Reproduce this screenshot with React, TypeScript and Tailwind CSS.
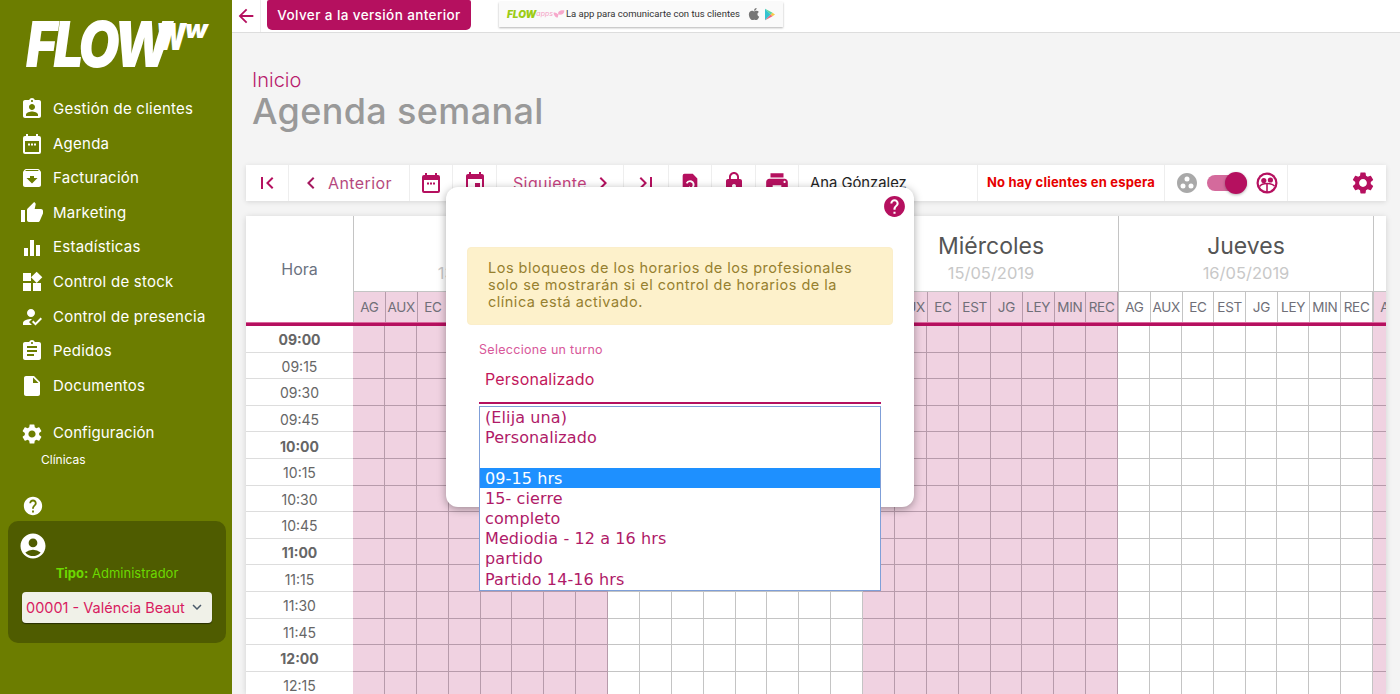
import {
  MdAssignmentInd,
  MdThumbUp,
  MdEqualizer,
  MdWidgets,
  MdHowToReg,
  MdAssignment,
  MdInsertDriveFile,
  MdSettings,
  MdHelp,
  MdAccountCircle,
  MdFirstPage,
  MdLastPage,
  MdChevronLeft,
  MdChevronRight,
  MdEvent,
  MdLock,
  MdPrint,
  MdGroupWork,
  MdArrowBack,
  MdExpandMore,
  MdArchive,
} from "react-icons/md";
import { FaApple } from "react-icons/fa";

const sans = "font-['Inter','Noto_Sans',sans-serif]";
const magenta = "text-[#b5105f]";

function CalendarDots({ className = "" }: { className?: string }) {
  return (
    <svg viewBox="0 0 24 24" className={className} fill="currentColor">
      <path d="M19 4h-1V2h-2v2H8V2H6v2H5a2 2 0 0 0-2 2v14a2 2 0 0 0 2 2h14a2 2 0 0 0 2-2V6a2 2 0 0 0-2-2zm0 16H5V9h14v11z" />
      <path d="M8 11.5h2v2H8zM11 11.5h2v2h-2zM14 11.5h2v2h-2z" />
    </svg>
  );
}

function FileRefresh({ className = "" }: { className?: string }) {
  return (
    <svg viewBox="0 0 24 24" className={className} fill="currentColor">
      <path d="M6 2h9l5 5v13a2 2 0 0 1-2 2H6a2 2 0 0 1-2-2V4a2 2 0 0 1 2-2zm6 7a5 5 0 0 0-4.6 3l1.8.8A3 3 0 1 1 12 17v-1.6l-3 2.6 3 2.6V19a5 5 0 0 0 0-10z" />
    </svg>
  );
}

function People({ className = "" }: { className?: string }) {
  return (
    <svg viewBox="0 0 24 24" className={className}>
      <circle cx="12" cy="12" r="10.5" fill="currentColor" />
      <circle cx="12" cy="12" r="8.3" fill="#fff" />
      <circle cx="8.8" cy="9.5" r="2.6" fill="currentColor" />
      <circle cx="15.4" cy="9" r="2.6" fill="currentColor" />
      <path d="M4.5 15.5c1.5-2.2 4-3 7.500-3s6 .8 7.500 2.500" fill="none" stroke="currentColor" strokeWidth="1.6" />
      <path d="M11.2 13h1.6v8h-1.6z" fill="currentColor" />
    </svg>
  );
}

function Butterfly({ className = "" }: { className?: string }) {
  return (
    <svg viewBox="0 0 20 14" className={className} fill="#f7a8cb">
      <path d="M9 8C7 3 12 0 19 1c0 5-4 8-10 7zM9 8c-3-3-6-4-8-3 0 4 3 8 7 8z" />
    </svg>
  );
}

function PlayBadge({ className = "" }: { className?: string }) {
  return (
    <svg viewBox="0 0 12 14" className={className}>
      <path d="M0 0l7 7-7 7z" fill="#35c3d0" />
      <path d="M0 0l9 5-2 2z" fill="#5bd69a" />
      <path d="M0 14l9-5-2-2z" fill="#f0647a" />
      <path d="M9 5l3 2-3 2-2-2z" fill="#f7c948" />
    </svg>
  );
}

const navTop = [
  { label: "Gestión de clientes", Icon: MdAssignmentInd },
  { label: "Agenda", Icon: CalendarDots },
  { label: "Facturación", Icon: MdArchive },
  { label: "Marketing", Icon: MdThumbUp },
  { label: "Estadísticas", Icon: MdEqualizer },
  { label: "Control de stock", Icon: MdWidgets },
  { label: "Control de presencia", Icon: MdHowToReg },
  { label: "Pedidos", Icon: MdAssignment },
  { label: "Documentos", Icon: MdInsertDriveFile },
];

const staff = ["AG", "AUX", "EC", "EST", "JG", "LEY", "MIN", "REC"];
const days = [
  { name: "Lunes", date: "13/05/2019", blocked: true },
  { name: "Martes", date: "14/05/2019", blocked: false },
  { name: "Miércoles", date: "15/05/2019", blocked: true },
  { name: "Jueves", date: "16/05/2019", blocked: false },
  { name: "Viernes", date: "17/05/2019", blocked: true },
];
const hours = [
  "09:00", "09:15", "09:30", "09:45", "10:00", "10:15", "10:30",
  "10:45", "11:00", "11:15", "11:30", "11:45", "12:00", "12:15",
];
const options = ["(Elija una)", "Personalizado", "", "09-15 hrs", "15- cierre", "completo", "Mediodia - 12 a 16 hrs", "partido", "Partido 14-16 hrs"];

function Sidebar() {
  return (
    <aside className={`w-[232px] shrink-0 h-full bg-[#6c7d00] text-white flex flex-col ${sans}`}>
      <div className="h-[92px] pl-[26px] pt-[13px] flex items-start overflow-hidden font-black italic">
        <span className="w-[131px] shrink-0 whitespace-nowrap origin-left scale-x-[0.84] text-[63px] leading-[63px] tracking-[-4px]">FLOW</span>
        <span className="w-[28px] shrink-0 origin-left scale-x-[0.65] text-[50px] leading-[50px] -mt-[6px]">w</span>
        <span className="shrink-0 text-[26px] leading-[26px] mt-[3px]">w</span>
      </div>
      <nav className="flex flex-col pl-[20px]">
        {navTop.map(({ label, Icon }) => (
          <div key={label} className="h-[34.6px] flex items-center gap-[9px] text-[15px] tracking-[0.25px]">
            <Icon className="w-[24px] h-[24px]" />
            <span>{label}</span>
          </div>
        ))}
        <div className="h-[34.6px] mt-[13px] flex items-center gap-[9px] text-[15px] tracking-[0.1px]">
          <MdSettings className="w-[24px] h-[24px]" />
          <span>Configuración</span>
        </div>
        <div className="pl-[21px] text-[12px] leading-[18px]">Clínicas</div>
      </nav>
      <div className="pl-[22px] mt-[26px]">
        <MdHelp className="w-[22px] h-[22px]" />
      </div>
      <div className="ml-[8px] mr-[6px] mt-[4px] h-[122px] rounded-[10px] bg-[#4f5c00] px-[14px] pt-[10px]">
        <MdAccountCircle className="w-[30px] h-[30px] -ml-[4px]" />
        <p className="text-center text-[13px] leading-[16px] mt-[4px] text-[#6cd900]">
          <span className="font-bold">Tipo:</span> Administrador
        </p>
        <div className="mt-[11px] h-[31px] rounded-[4px] bg-[#f0f1e8] shadow-[0_1px_1px_rgba(0,0,0,0.5)] flex items-center pl-[4px]">
          <span className="w-[159px] shrink-0 overflow-hidden whitespace-nowrap text-[14.5px] text-[#d81b60]">00001 - Valéncia Beauty</span>
          <MdExpandMore className="ml-[3px] w-[18px] h-[18px] text-[#4a5a6a]" />
        </div>
      </div>
    </aside>
  );
}

function Tool({ className = "", children }: { className?: string; children: React.ReactNode }) {
  return <div className={`h-full flex items-center justify-center border-r border-[#eeeeee] ${className}`}>{children}</div>;
}

function Toolbar() {
  return (
    <div className={`h-[36px] mt-[1px] mx-[14px] bg-white shadow-[0_1px_5px_rgba(0,0,0,0.12)] flex items-center ${magenta}`}>
      <Tool className="w-[43px]"><MdFirstPage className="w-[24px] h-[24px]" /></Tool>
      <Tool className="w-[121px] gap-[5px] pr-[3px] text-[#a5185f] text-[16px] tracking-[0.4px]">
        <MdChevronLeft className="w-[24px] h-[24px] -ml-[4px]" />
        <span className="opacity-80">Anterior</span>
      </Tool>
      <Tool className="w-[43px]"><CalendarDots className="w-[24px] h-[24px]" /></Tool>
      <Tool className="w-[44px]"><MdEvent className="w-[24px] h-[24px]" /></Tool>
      <Tool className="w-[127px] gap-[4px] pl-[4px] text-[16px] tracking-[0.4px]">
        <span className="opacity-80">Siguiente</span>
        <MdChevronRight className="w-[24px] h-[24px] -mr-[4px]" />
      </Tool>
      <Tool className="w-[45px]"><MdLastPage className="w-[24px] h-[24px]" /></Tool>
      <Tool className="w-[43px]"><FileRefresh className="w-[22px] h-[22px]" /></Tool>
      <Tool className="w-[44px]"><MdLock className="w-[24px] h-[24px]" /></Tool>
      <Tool className="w-[43px]"><MdPrint className="w-[26px] h-[26px]" /></Tool>
      <Tool className="w-[179px] !justify-start pl-[11px] text-[14.8px] text-[#222222]">Ana Gónzalez</Tool>
      <Tool className="w-[187px] text-[13px] font-bold tracking-[0.2px] text-[#e60000]">No hay clientes en espera</Tool>
      <Tool className="w-[123px] gap-[8px] pl-[2px]">
        <MdGroupWork className="w-[24px] h-[24px] text-[#a9a9a9]" />
        <div className="relative w-[40px] h-[16px] rounded-full bg-[#d46a9c]">
          <div className="absolute right-0 top-[-3px] w-[22px] h-[22px] rounded-full bg-[#b5105f] shadow-[0_1px_3px_rgba(0,0,0,0.3)]" />
        </div>
        <People className="w-[24px] h-[24px]" />
      </Tool>
      <div className="flex-1 h-full flex items-center justify-end pr-[10px]">
        <MdSettings className="w-[26px] h-[26px]" />
      </div>
    </div>
  );
}

function Schedule() {
  return (
    <div className="mt-[15px] mx-[14px] h-[478px] overflow-hidden bg-white shadow-[0_1px_6px_rgba(0,0,0,0.15)] flex flex-col">
      <div className="flex h-[106px] shrink-0">
        <div className="w-[107px] shrink-0 pt-[41px] text-center text-[16px] text-[#6b7280]">Hora</div>
        {days.map((d) => (
          <div key={d.date} className="w-[255px] shrink-0 border-l border-[#c4c4c4] flex flex-col">
            <div className="h-[75px] flex flex-col items-center justify-start pt-[16px]">
              <span className="text-[23px] leading-[28px] text-[#555555]">{d.name}</span>
              <span className="text-[16.5px] leading-[20px] text-[#c8c8c8] mt-[3px]">{d.date}</span>
            </div>
            <div className="flex h-[31px] border-t border-[#c4c4c4]">
              {staff.map((s) => (
                <div key={s} className={`flex-1 flex items-center justify-center pt-[1px] text-[13.5px] tracking-[-0.3px] text-[#6f6f78] border-r ${d.blocked ? "bg-[#f0d2e1] border-[#b79bab]" : "bg-white border-[#c4c4c4]"}`}>
                  {s}
                </div>
              ))}
            </div>
          </div>
        ))}
      </div>
      <div className="h-[4px] shrink-0 bg-[#b5105f] border-t border-[#d9679c]" />
      {hours.map((h) => (
        <div key={h} className="flex h-[26.6px] shrink-0">
          <div className={`w-[107px] shrink-0 flex items-center justify-center pt-[2px] text-[14px] text-[#666666] border-b border-[#dddddd] ${h.endsWith(":00") ? "font-bold" : ""}`}>
            {h}
          </div>
          {days.map((d) => (
            <div key={d.date} className="w-[255px] shrink-0 flex">
              {staff.map((s) => (
                <div key={s} className={`flex-1 border-r border-b ${d.blocked ? "bg-[#f0d2e1] border-[#b79bab]" : "bg-white border-[#c4c4c4]"}`} />
              ))}
            </div>
          ))}
        </div>
      ))}
    </div>
  );
}

function Modal() {
  return (
    <div className={`absolute left-[446px] top-[187px] w-[468px] h-[320px] rounded-[12px] bg-white shadow-[0_2px_8px_rgba(0,0,0,0.35)] ${sans}`}>
      <div className="flex justify-end pt-[7px] pr-[7px]">
        <MdHelp className={`w-[25px] h-[25px] ${magenta}`} />
      </div>
      <div className="mx-[21px] mt-[28px] h-[78px] rounded-[4px] border border-[#fbeeca] bg-[#fdf1cb] pl-[20px] pt-[11px] text-[14.5px] leading-[17px] tracking-[0.5px] whitespace-nowrap text-[#96802f]">
        Los bloqueos de los horarios de los profesionales<br />
        solo se mostrarán si el control de horarios de la<br />
        clínica está activado.
      </div>
      <div className="mx-[33px] mt-[17px]">
        <p className="text-[12.5px] leading-[16px] tracking-[0.3px] text-[#d8589a]">Seleccione un turno</p>
        <div className="h-[46px] pl-[6px] pt-[9px] text-[16px] leading-[24px] tracking-[0.2px] text-[#c2185b] border-b-2 border-[#b5105f]">Personalizado</div>
      </div>
      <div className="absolute left-[33px] top-[219px] w-[402px] h-[185px] bg-white border border-[#7f9fd8] font-['DejaVu_Sans',sans-serif] text-[16px] tracking-[0.1px] text-[#b01a68]">
        {options.map((o) => (
          <div key={o} className={`h-[20.2px] leading-[22.5px] pl-[5px] ${o === "09-15 hrs" ? "bg-[#1e90ff] text-white" : ""}`}>{o}</div>
        ))}
      </div>
    </div>
  );
}

export default function App() {
  return (
    <div className="relative w-[1400px] h-[694px] overflow-hidden flex bg-[#f4f4f4]">
      <Sidebar />
      <main className={`flex-1 min-w-0 ${sans}`}>
        <header className="h-[33px] bg-white border-b border-[#dddddd] flex items-center">
          <div className="w-[29px] h-full border-r border-[#eeeeee] flex items-center justify-center">
            <MdArrowBack className={`w-[22px] h-[22px] ${magenta}`} />
          </div>
          <button className="ml-[6px] h-[30px] -mt-[3px] w-[204px] pt-[1px] rounded-b-[5px] rounded-t-[2px] bg-[#b5105f] text-white text-[13.5px] font-medium tracking-[0.4px]">
            Volver a la versión anterior
          </button>
          <div className="ml-[28px] h-[25px] -mt-[4px] w-[284px] bg-[#fafafa] shadow-[0_1px_2px_rgba(0,0,0,0.3)] flex items-center pl-[8px]">
            <span className="text-[10px] font-black italic text-[#9ccc14]">FLOW</span>
            <span className="text-[7px] italic text-[#f4a0c4]">apps</span>
            <Butterfly className="w-[12px] h-[10px] mr-[1px]" />
            <span className="text-[9.5px] text-[#333333] whitespace-nowrap font-['Roboto']">La app para comunicarte con tus clientes</span>
            <FaApple className="ml-[7px] w-[14px] h-[14px] text-[#777777]" />
            <PlayBadge className="ml-[4px] w-[10px] h-[13px]" />
          </div>
        </header>
        <div className="pl-[20px] pt-[35px] h-[131px]">
          <p className="text-[20px] leading-[24px] text-[#b8206c] font-light">Inicio</p>
          <h1 className="text-[36px] leading-[40px] -mt-[1px] font-medium tracking-[0.35px] text-[#999999]">Agenda semanal</h1>
        </div>
        <Toolbar />
        <Schedule />
      </main>
      <Modal />
    </div>
  );
}
